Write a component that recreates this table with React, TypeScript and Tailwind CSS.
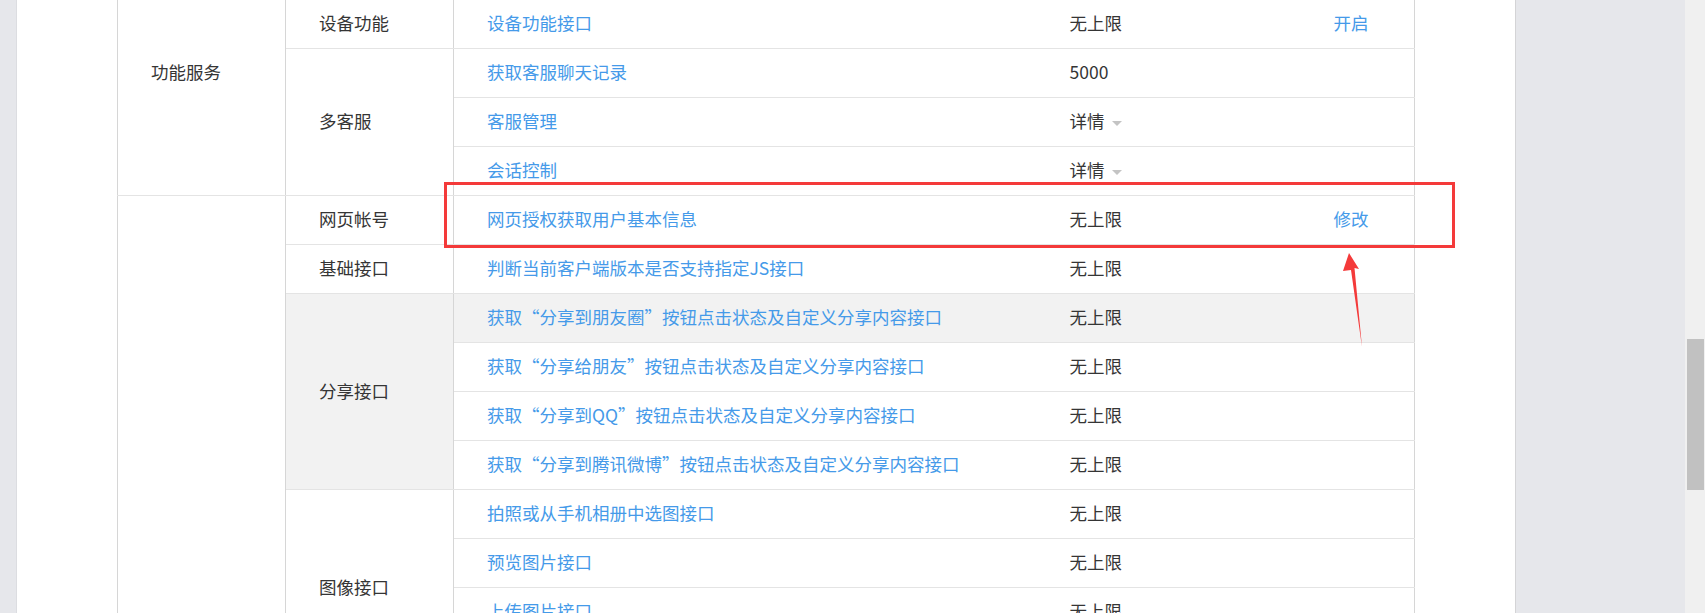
import React from "react";

type Row = { name: string; limit: string; action?: string; detail?: boolean; hl?: boolean };
type Sub = { label: string; rows: Row[]; gray?: boolean };
type Group = { label: string; subs: Sub[]; pad?: boolean };

const groups: Group[] = [
  {
    label: "功能服务",
    pad: true,
    subs: [
      { label: "设备功能", rows: [{ name: "设备功能接口", limit: "无上限", action: "开启" }] },
      {
        label: "多客服",
        rows: [
          { name: "获取客服聊天记录", limit: "5000" },
          { name: "客服管理", limit: "详情", detail: true },
          { name: "会话控制", limit: "详情", detail: true },
        ],
      },
    ],
  },
  {
    label: "",
    subs: [
      { label: "网页帐号", rows: [{ name: "网页授权获取用户基本信息", limit: "无上限", action: "修改" }] },
      { label: "基础接口", rows: [{ name: "判断当前客户端版本是否支持指定JS接口", limit: "无上限" }] },
      {
        label: "分享接口",
        gray: true,
        rows: [
          { name: "获取“分享到朋友圈”按钮点击状态及自定义分享内容接口", limit: "无上限", hl: true },
          { name: "获取“分享给朋友”按钮点击状态及自定义分享内容接口", limit: "无上限" },
          { name: "获取“分享到QQ”按钮点击状态及自定义分享内容接口", limit: "无上限" },
          { name: "获取“分享到腾讯微博”按钮点击状态及自定义分享内容接口", limit: "无上限" },
        ],
      },
      {
        label: "图像接口",
        rows: [
          { name: "拍照或从手机相册中选图接口", limit: "无上限" },
          { name: "预览图片接口", limit: "无上限" },
          { name: "上传图片接口", limit: "无上限" },
          { name: "下载图片接口", limit: "无上限" },
        ],
      },
    ],
  },
];

function Caret() {
  return (
    <svg width="10" height="6" viewBox="0 0 10 6" className="inline-block ml-[7px] align-middle">
      <polygon points="0,0 10,0 5,5" fill="#c4c4c4" />
    </svg>
  );
}

export default function App() {
  const trs: React.ReactNode[] = [];
  groups.forEach((g, gi) => {
    const gCount = g.subs.reduce((a, s) => a + s.rows.length, 0);
    g.subs.forEach((s, si) => {
      s.rows.forEach((r, ri) => {
        const first = si === 0 && ri === 0;
        trs.push(
          <tr key={`${gi}-${si}-${ri}`} className="h-[49px]">
            {first && (
              <td
                rowSpan={gCount}
                className={`border-b border-b-[#e4e4e4] border-l border-l-[#d6d6d6] border-r border-r-[#d6d6d6] pl-[33px] align-middle ${
                  g.pad ? "pb-[49px]" : ""
                }`}
              >
                {g.label}
              </td>
            )}
            {ri === 0 && (
              <td
                rowSpan={s.rows.length}
                className={`border-b border-b-[#e4e4e4] border-r border-r-[#d6d6d6] pl-[33px] align-middle ${
                  s.gray ? "bg-[#f2f2f2]" : ""
                }`}
              >
                {s.label}
              </td>
            )}
            <td className={`border-b border-b-[#e4e4e4] pl-[33px] text-[#459ae9] whitespace-nowrap ${r.hl ? "bg-[#f2f2f2]" : ""}`}>
              {r.name}
            </td>
            <td className={`border-b border-b-[#e4e4e4] pl-[33px] whitespace-nowrap ${r.hl ? "bg-[#f2f2f2]" : ""}`}>
              {r.limit}
              {r.detail && <Caret />}
            </td>
            <td
              className={`border-b border-b-[#e4e4e4] border-r border-r-[#d6d6d6] pl-[33px] text-[#459ae9] whitespace-nowrap ${
                r.hl ? "bg-[#f2f2f2]" : ""
              }`}
            >
              {r.action ?? ""}
            </td>
          </tr>
        );
      });
    });
  });

  return (
    <div
      className="relative flex h-[613px] w-[1706px] overflow-hidden bg-white text-[17.5px] text-[#353535]"
      style={{ fontFamily: '"Noto Sans CJK SC", "Microsoft YaHei", sans-serif' }}
      lang="zh-CN"
    >
      <div className="w-[17px] shrink-0 bg-[#e6e7eb] border-r border-r-[#dcdde1]" />
      <div className="w-[1499px] shrink-0 bg-white border-r border-r-[#d4d4d6] pl-[100px]">
        <table className="-mt-[1px] table-fixed border-collapse w-[1297px]">
          <colgroup>
            <col className="w-[168px]" />
            <col className="w-[168px]" />
            <col className="w-[583px]" />
            <col className="w-[264px]" />
            <col className="w-[114px]" />
          </colgroup>
          <tbody>{trs}</tbody>
        </table>
      </div>
      <div className="w-[169px] shrink-0 bg-[#e6e7eb]" />
      <div className="w-[20px] shrink-0 bg-[#f0f0f0] flex flex-col pt-[339px] pl-[2px]">
        <div className="w-[17px] h-[151px] bg-[#c1c1c1]" />
      </div>

      {/* red highlight box */}
      <div className="absolute left-[444px] top-[182px] w-[1011px] h-[66px] border-[3px] border-[#f43a3a]" />
      {/* red arrow */}
      <svg className="absolute left-[1330px] top-[245px]" width="40" height="110" viewBox="0 0 40 110">
        <polygon points="19,8 29,24 24.5,23 32,102 21,25 13,26" fill="#f43a3a" />
      </svg>
    </div>
  );
}
